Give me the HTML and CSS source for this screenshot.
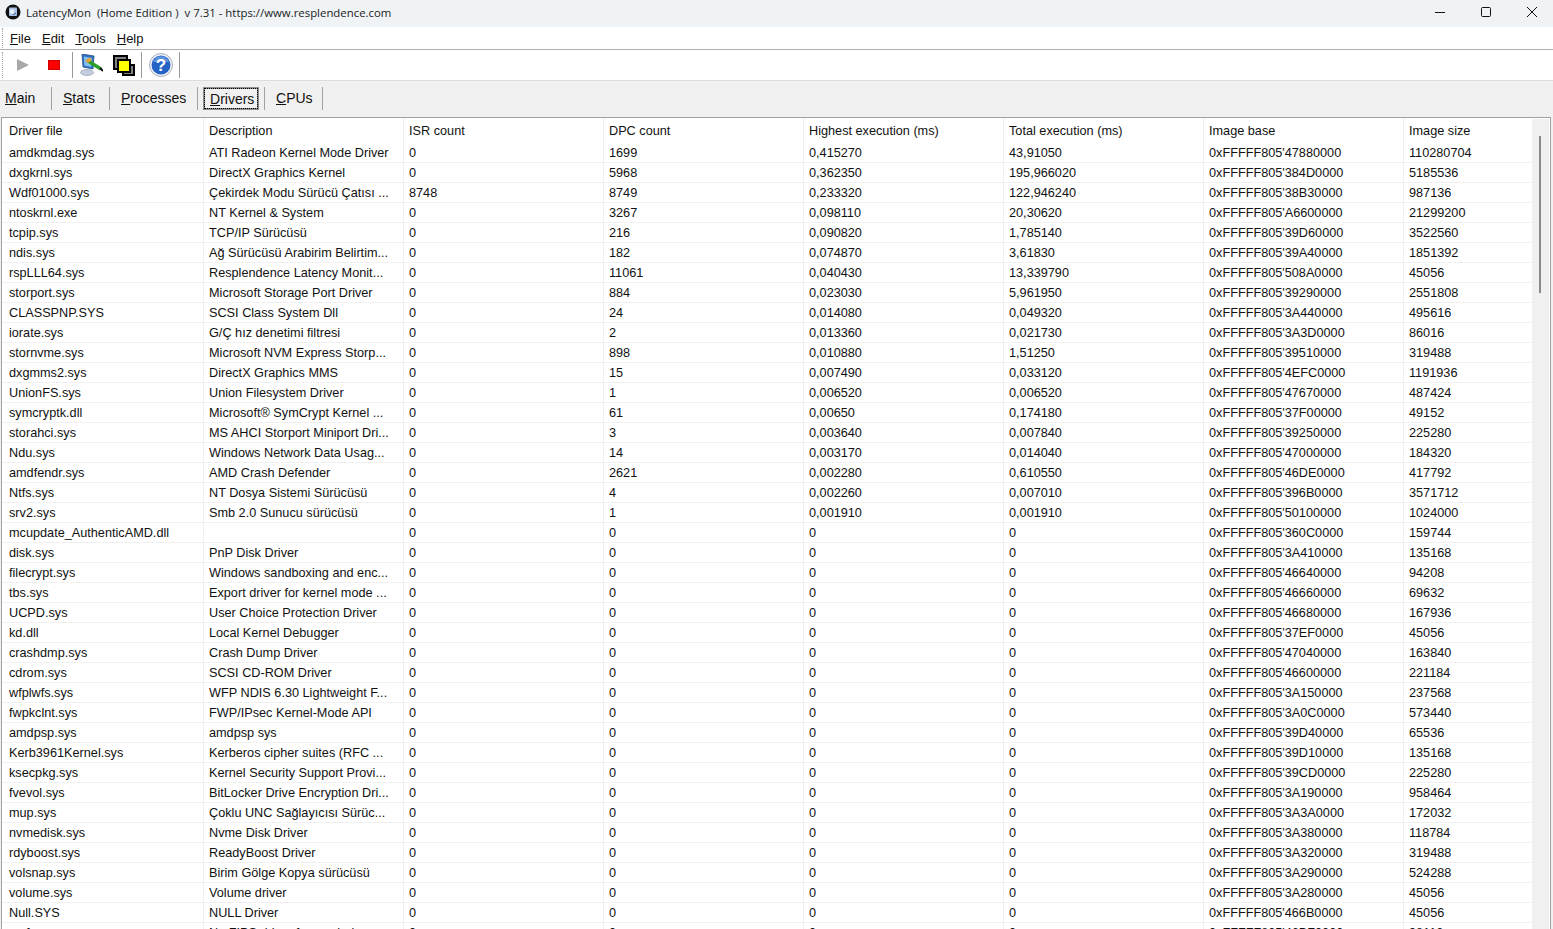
FILE: index.html
```html
<!DOCTYPE html>
<html lang="tr">
<head>
<meta charset="utf-8">
<title>LatencyMon</title>
<link rel="stylesheet" href="styles.css">
</head>
<body>
<div class="app">
  <header class="titlebar">
    <svg class="appicon" width="16" height="16" viewBox="0 0 16 16"><circle cx="8" cy="8" r="7.5" fill="#111"/><rect x="4" y="3.5" width="8" height="8.5" rx="1" fill="#a9c4e4"/><path d="M5 5.5h4v4H5z" fill="#e6eef8"/><path d="M8 11l3-2" stroke="#3a5a8a" stroke-width="1"/></svg>
    <span class="apptitle">LatencyMon&nbsp; (Home Edition )&nbsp; v 7.31 - https://www.resplendence.com</span>
    <div class="wincontrols">
      <svg width="12" height="12" viewBox="0 0 12 12"><path d="M1 6.500h10" stroke="#111" stroke-width="1"/></svg>
      <svg width="12" height="12" viewBox="0 0 12 12"><rect x="1.500" y="1.500" width="9" height="9" rx="1" fill="none" stroke="#111"/></svg>
      <svg width="12" height="12" viewBox="0 0 12 12"><path d="M1 1l10 10M11 1L1 11" stroke="#111" stroke-width="1"/></svg>
    </div>
  </header>
  <nav class="menubar">
    <span class="grip"></span>
    <span><u>F</u>ile</span><span><u>E</u>dit</span><span><u>T</u>ools</span><span><u>H</u>elp</span>
  </nav>
  <div class="toolbar">
    <span class="grip"></span>
    <svg class="tool t-play" width="12" height="12" viewBox="0 0 12 12"><path d="M0 0l12 6-12 6z" fill="#a8a8a8"/></svg>
    <span class="tool t-stop"></span>
    <span class="tsep"></span>
    <svg class="tool t-mon" width="23" height="22" viewBox="0 0 23 22"><ellipse cx="7" cy="18.500" rx="6.500" ry="3" fill="#c4cde0" stroke="#8a94b0" stroke-width=".6"/><path d="M2 0l12 2-1 13-10-2z" fill="#2f6fc0" stroke="#26508f" stroke-width=".8"/><path d="M4 2.500l8 1.500-.8 9-7-1.600z" fill="#7fc0ee"/><path d="M8 7l13 8" stroke="#2aa02a" stroke-width="3.400"/><path d="M20 14l3 3" stroke="#111" stroke-width="2"/><path d="M5 6.500l5-3 2 2.500-4 3z" fill="#e8a030"/></svg>
    <svg class="tool t-win" width="22" height="21" viewBox="0 0 22 21"><rect x="1" y="1" width="13" height="13" fill="#808080" stroke="#000" stroke-width="2"/><rect x="10" y="10" width="11" height="10" fill="#808080" stroke="#000" stroke-width="2"/><rect x="5" y="5" width="12" height="12" fill="#ff0" stroke="#000" stroke-width="2"/></svg>
    <span class="tsep"></span>
    <svg class="tool t-help" width="24" height="24" viewBox="0 0 24 24"><circle cx="12" cy="12" r="11.500" fill="#f0f3f8" stroke="#a8aeb8"/><circle cx="12" cy="12" r="9.500" fill="#2462c4"/><path d="M4 9a8.500 8.500 0 0 1 16 0z" fill="#5f93e0"/><text x="12" y="18" class="helpq">?</text></svg>
    <span class="tsep"></span>
  </div>
  <div class="tabs">
    <span class="tab tab-main"><u>M</u>ain</span>
    <span class="tab tab-stats"><u>S</u>tats</span>
    <span class="tab tab-proc"><u>P</u>rocesses</span>
    <span class="tab tab-drv"><span class="pressed"><u>D</u>rivers</span></span>
    <span class="tab tab-cpu"><u>C</u>PUs</span>
  </div>
  <main class="listview">
    <div class="scroller">
      <div class="row head"><div>Driver file</div><div>Description</div><div>ISR count</div><div>DPC count</div><div>Highest execution (ms)</div><div>Total execution (ms)</div><div>Image base</div><div>Image size</div></div>
      <div class="row"><div>amdkmdag.sys</div><div>ATI Radeon Kernel Mode Driver</div><div>0</div><div>1699</div><div>0,415270</div><div>43,91050</div><div>0xFFFFF805'47880000</div><div>110280704</div></div>
      <div class="row"><div>dxgkrnl.sys</div><div>DirectX Graphics Kernel</div><div>0</div><div>5968</div><div>0,362350</div><div>195,966020</div><div>0xFFFFF805'384D0000</div><div>5185536</div></div>
      <div class="row"><div>Wdf01000.sys</div><div>Çekirdek Modu Sürücü Çatısı ...</div><div>8748</div><div>8749</div><div>0,233320</div><div>122,946240</div><div>0xFFFFF805'38B30000</div><div>987136</div></div>
      <div class="row"><div>ntoskrnl.exe</div><div>NT Kernel &amp; System</div><div>0</div><div>3267</div><div>0,098110</div><div>20,30620</div><div>0xFFFFF805'A6600000</div><div>21299200</div></div>
      <div class="row"><div>tcpip.sys</div><div>TCP/IP Sürücüsü</div><div>0</div><div>216</div><div>0,090820</div><div>1,785140</div><div>0xFFFFF805'39D60000</div><div>3522560</div></div>
      <div class="row"><div>ndis.sys</div><div>Ağ Sürücüsü Arabirim Belirtim...</div><div>0</div><div>182</div><div>0,074870</div><div>3,61830</div><div>0xFFFFF805'39A40000</div><div>1851392</div></div>
      <div class="row"><div>rspLLL64.sys</div><div>Resplendence Latency Monit...</div><div>0</div><div>11061</div><div>0,040430</div><div>13,339790</div><div>0xFFFFF805'508A0000</div><div>45056</div></div>
      <div class="row"><div>storport.sys</div><div>Microsoft Storage Port Driver</div><div>0</div><div>884</div><div>0,023030</div><div>5,961950</div><div>0xFFFFF805'39290000</div><div>2551808</div></div>
      <div class="row"><div>CLASSPNP.SYS</div><div>SCSI Class System Dll</div><div>0</div><div>24</div><div>0,014080</div><div>0,049320</div><div>0xFFFFF805'3A440000</div><div>495616</div></div>
      <div class="row"><div>iorate.sys</div><div>G/Ç hız denetimi filtresi</div><div>0</div><div>2</div><div>0,013360</div><div>0,021730</div><div>0xFFFFF805'3A3D0000</div><div>86016</div></div>
      <div class="row"><div>stornvme.sys</div><div>Microsoft NVM Express Storp...</div><div>0</div><div>898</div><div>0,010880</div><div>1,51250</div><div>0xFFFFF805'39510000</div><div>319488</div></div>
      <div class="row"><div>dxgmms2.sys</div><div>DirectX Graphics MMS</div><div>0</div><div>15</div><div>0,007490</div><div>0,033120</div><div>0xFFFFF805'4EFC0000</div><div>1191936</div></div>
      <div class="row"><div>UnionFS.sys</div><div>Union Filesystem Driver</div><div>0</div><div>1</div><div>0,006520</div><div>0,006520</div><div>0xFFFFF805'47670000</div><div>487424</div></div>
      <div class="row"><div>symcryptk.dll</div><div>Microsoft® SymCrypt Kernel ...</div><div>0</div><div>61</div><div>0,00650</div><div>0,174180</div><div>0xFFFFF805'37F00000</div><div>49152</div></div>
      <div class="row"><div>storahci.sys</div><div>MS AHCI Storport Miniport Dri...</div><div>0</div><div>3</div><div>0,003640</div><div>0,007840</div><div>0xFFFFF805'39250000</div><div>225280</div></div>
      <div class="row"><div>Ndu.sys</div><div>Windows Network Data Usag...</div><div>0</div><div>14</div><div>0,003170</div><div>0,014040</div><div>0xFFFFF805'47000000</div><div>184320</div></div>
      <div class="row"><div>amdfendr.sys</div><div>AMD Crash Defender</div><div>0</div><div>2621</div><div>0,002280</div><div>0,610550</div><div>0xFFFFF805'46DE0000</div><div>417792</div></div>
      <div class="row"><div>Ntfs.sys</div><div>NT Dosya Sistemi Sürücüsü</div><div>0</div><div>4</div><div>0,002260</div><div>0,007010</div><div>0xFFFFF805'396B0000</div><div>3571712</div></div>
      <div class="row"><div>srv2.sys</div><div>Smb 2.0 Sunucu sürücüsü</div><div>0</div><div>1</div><div>0,001910</div><div>0,001910</div><div>0xFFFFF805'50100000</div><div>1024000</div></div>
      <div class="row"><div>mcupdate_AuthenticAMD.dll</div><div></div><div>0</div><div>0</div><div>0</div><div>0</div><div>0xFFFFF805'360C0000</div><div>159744</div></div>
      <div class="row"><div>disk.sys</div><div>PnP Disk Driver</div><div>0</div><div>0</div><div>0</div><div>0</div><div>0xFFFFF805'3A410000</div><div>135168</div></div>
      <div class="row"><div>filecrypt.sys</div><div>Windows sandboxing and enc...</div><div>0</div><div>0</div><div>0</div><div>0</div><div>0xFFFFF805'46640000</div><div>94208</div></div>
      <div class="row"><div>tbs.sys</div><div>Export driver for kernel mode ...</div><div>0</div><div>0</div><div>0</div><div>0</div><div>0xFFFFF805'46660000</div><div>69632</div></div>
      <div class="row"><div>UCPD.sys</div><div>User Choice Protection Driver</div><div>0</div><div>0</div><div>0</div><div>0</div><div>0xFFFFF805'46680000</div><div>167936</div></div>
      <div class="row"><div>kd.dll</div><div>Local Kernel Debugger</div><div>0</div><div>0</div><div>0</div><div>0</div><div>0xFFFFF805'37EF0000</div><div>45056</div></div>
      <div class="row"><div>crashdmp.sys</div><div>Crash Dump Driver</div><div>0</div><div>0</div><div>0</div><div>0</div><div>0xFFFFF805'47040000</div><div>163840</div></div>
      <div class="row"><div>cdrom.sys</div><div>SCSI CD-ROM Driver</div><div>0</div><div>0</div><div>0</div><div>0</div><div>0xFFFFF805'46600000</div><div>221184</div></div>
      <div class="row"><div>wfplwfs.sys</div><div>WFP NDIS 6.30 Lightweight F...</div><div>0</div><div>0</div><div>0</div><div>0</div><div>0xFFFFF805'3A150000</div><div>237568</div></div>
      <div class="row"><div>fwpkclnt.sys</div><div>FWP/IPsec Kernel-Mode API</div><div>0</div><div>0</div><div>0</div><div>0</div><div>0xFFFFF805'3A0C0000</div><div>573440</div></div>
      <div class="row"><div>amdpsp.sys</div><div>amdpsp sys</div><div>0</div><div>0</div><div>0</div><div>0</div><div>0xFFFFF805'39D40000</div><div>65536</div></div>
      <div class="row"><div>Kerb3961Kernel.sys</div><div>Kerberos cipher suites (RFC ...</div><div>0</div><div>0</div><div>0</div><div>0</div><div>0xFFFFF805'39D10000</div><div>135168</div></div>
      <div class="row"><div>ksecpkg.sys</div><div>Kernel Security Support Provi...</div><div>0</div><div>0</div><div>0</div><div>0</div><div>0xFFFFF805'39CD0000</div><div>225280</div></div>
      <div class="row"><div>fvevol.sys</div><div>BitLocker Drive Encryption Dri...</div><div>0</div><div>0</div><div>0</div><div>0</div><div>0xFFFFF805'3A190000</div><div>958464</div></div>
      <div class="row"><div>mup.sys</div><div>Çoklu UNC Sağlayıcısı Sürüc...</div><div>0</div><div>0</div><div>0</div><div>0</div><div>0xFFFFF805'3A3A0000</div><div>172032</div></div>
      <div class="row"><div>nvmedisk.sys</div><div>Nvme Disk Driver</div><div>0</div><div>0</div><div>0</div><div>0</div><div>0xFFFFF805'3A380000</div><div>118784</div></div>
      <div class="row"><div>rdyboost.sys</div><div>ReadyBoost Driver</div><div>0</div><div>0</div><div>0</div><div>0</div><div>0xFFFFF805'3A320000</div><div>319488</div></div>
      <div class="row"><div>volsnap.sys</div><div>Birim Gölge Kopya sürücüsü</div><div>0</div><div>0</div><div>0</div><div>0</div><div>0xFFFFF805'3A290000</div><div>524288</div></div>
      <div class="row"><div>volume.sys</div><div>Volume driver</div><div>0</div><div>0</div><div>0</div><div>0</div><div>0xFFFFF805'3A280000</div><div>45056</div></div>
      <div class="row"><div>Null.SYS</div><div>NULL Driver</div><div>0</div><div>0</div><div>0</div><div>0</div><div>0xFFFFF805'466B0000</div><div>45056</div></div>
      <div class="row"><div>msfs.sys</div><div>No FIPS driver for symbols</div><div>0</div><div>0</div><div>0</div><div>0</div><div>0xFFFFF805'46BF0000</div><div>98112</div></div>
    </div>
    <div class="vscroll"><div class="thumb"></div></div>
  </main>
</div>
</body>
</html>
```
FILE: styles.css
```css
* { box-sizing: border-box; }
html, body { margin: 0; height: 100%; overflow: hidden; background: #f0f0f0; }
body { font-family: "Liberation Sans", Arial, sans-serif; color: #000; }
.app { width: 1553px; height: 929px; display: flex; flex-direction: column; overflow: hidden; }
.titlebar { height: 27px; background: #eff3f6; display: flex; align-items: center; padding: 0 0 3px 5px; font-family: "Open Sans", sans-serif; font-size: 11.4px; color: #222; flex: none; }
.appicon { margin-right: 5px; }
.apptitle { white-space: nowrap; }
.wincontrols { margin-left: auto; display: flex; gap: 34px; padding-right: 15px; }
.grip { width: 1px; height: 20px; border-left: 1px dotted #a8a8a8; flex: none; margin: 0 -3px 0 2px; }
.menubar { height: 23px; background: #fff; border-bottom: 1px solid #aeaeb4; display: flex; align-items: center; gap: 11px; font-size: 13px; color: #111; flex: none; }
.menubar .grip { margin-right: -4px; }
.toolbar { height: 31px; background: #fff; border-bottom: 1px solid #dcdcdc; display: flex; align-items: center; flex: none; }
.toolbar .grip { height: 26px; margin-right: 14px; }
.tool { flex: none; }
.t-stop { width: 12px; height: 10px; background: #f00; margin-left: 19px; margin-right: 12px; border: 1px solid #c80000; }
.tsep { width: 1px; height: 26px; background: #999; flex: none; }
.t-mon { margin-left: 7px; margin-right: 10px; }
.t-win { margin-right: 6px; }
.t-help { margin-left: 7px; margin-right: 6px; }
.helpq { font: bold 17px "Liberation Sans", sans-serif; fill: #fff; text-anchor: middle; }
.tabs { height: 36px; display: flex; align-items: center; background: #f0f0f0; font-size: 14px; flex: none; color: #111; padding-bottom: 1px; }
.tab { display: block; height: 23px; line-height: 22px; border-right: 1px solid #a0a0a0; flex: none; }
.tab-main { width: 52px; padding-left: 5px; }
.tab-stats { width: 58px; padding-left: 11px; }
.tab-proc { width: 88px; padding-left: 11px; }
.tab-drv { width: 67px; padding-left: 5px; }
.tab-cpu { width: 58px; padding-left: 11px; }
.pressed { display: block; width: 56px; height: 23px; border: 2px solid #8c8c8c; outline: 1px dotted #000; outline-offset: -2px; padding-left: 5px; line-height: 21px; }
.listview { flex: 1; min-height: 0; margin: 0 2px 0 1px; border: 1px solid #a0a0a8; border-bottom: 0; background: #fff; display: flex; overflow: hidden; }
.scroller { width: 1530px; flex: none; overflow: hidden; }
.row { display: grid; grid-template-columns: 201px repeat(7, 200px); height: 20px; border-bottom: 1px solid #f0f0f0; font-size: 12.7px; line-height: 21px; color: #111; }
.row > div { padding-left: 5px; border-left: 1px solid #f0f0f0; white-space: nowrap; overflow: hidden; }
.row > div:first-child { padding-left: 7px; border-left: 0; }
.row.head { height: 25px; line-height: 27px; border-bottom: 0; }
.vscroll { flex: 1; background: #f0f0f0; margin-top: 1px; margin-right: 1px; }
.thumb { width: 2px; height: 157px; background: #8a8a8a; margin: 17px 0 0 7px; }
```
